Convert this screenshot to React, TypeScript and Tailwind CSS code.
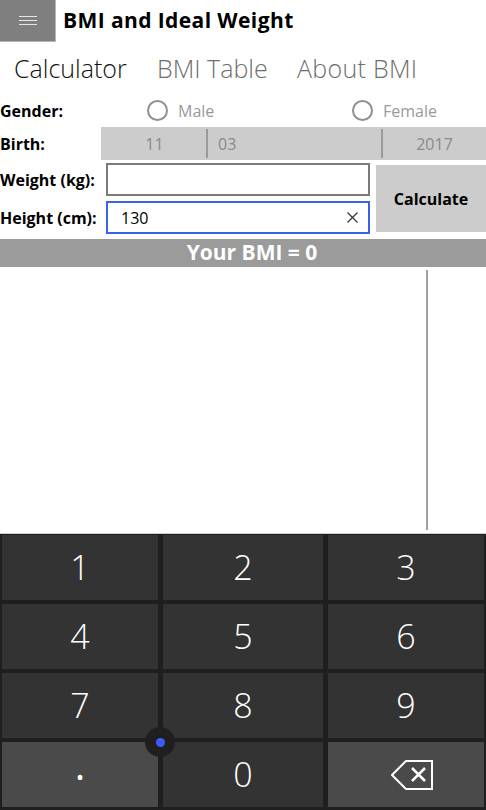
import React from "react";

const font = { fontFamily: '"Open Sans", "Noto Sans", sans-serif' };

function Radio({ label }: { label: string }) {
  return (
    <div className="flex items-center">
      <div className="w-[21px] h-[21px] rounded-full border-2 border-[#8f8f8f]" />
      <span className="ml-[10px] text-[16px] text-[#9a9a9a]">{label}</span>
    </div>
  );
}

function Key({ children, light }: { children: React.ReactNode; light?: boolean }) {
  return (
    <div
      className={`flex items-center justify-center h-[65px] text-white text-[34px] font-light ${
        light ? "bg-[#4a4a4a]" : "bg-[#333333]"
      }`}
    >
      {children}
    </div>
  );
}

export default function App() {
  return (
    <div className="w-[486px] h-[810px] bg-white overflow-hidden flex flex-col text-black" style={font}>
      {/* Header */}
      <div className="flex items-center h-[42px] shrink-0">
        <div className="w-[56px] h-[42px] bg-[#7f7f7f] border-r border-b border-[#b5b5b5] flex flex-col items-center justify-center gap-[3px]">
          <div className="w-[18px] h-[1px] bg-[#e6e6e6]" />
          <div className="w-[18px] h-[1px] bg-[#e6e6e6]" />
          <div className="w-[18px] h-[1px] bg-[#e6e6e6]" />
        </div>
        <div className="ml-[7px] text-[21px] font-bold tracking-[0.4px]">BMI and Ideal Weight</div>
      </div>

      {/* Tabs */}
      <div className="flex items-center h-[54px] pl-[14px] shrink-0 text-[25px] font-light">
        <div className="w-[143px] text-[#111111]">Calculator</div>
        <div className="w-[140px] text-[#6e6e6e]">BMI Table</div>
        <div className="text-[#6e6e6e] tracking-[0.3px]">About BMI</div>
      </div>

      {/* Gender */}
      <div className="flex items-center h-[29px] shrink-0">
        <div className="w-[147px] text-[16px] font-bold">Gender:</div>
        <div className="w-[205px]">
          <Radio label="Male" />
        </div>
        <Radio label="Female" />
      </div>

      {/* Birth */}
      <div className="flex items-center h-[33px] mt-[2px] shrink-0">
        <div className="w-[101px] text-[16px] font-bold">Birth:</div>
        <div className="flex-1 h-[33px] bg-[#cccccc] flex items-center text-[16px] text-[#8a8a8a]">
          <div className="w-[105px] text-center pl-[2px]">11</div>
          <div className="w-[2px] h-[29px] bg-[#9a9a9a]" />
          <div className="w-[173px] pl-[10px]">03</div>
          <div className="w-[2px] h-[29px] bg-[#9a9a9a]" />
          <div className="flex-1 text-center">2017</div>
        </div>
      </div>

      {/* Weight / Height */}
      <div className="flex items-center mt-[3px] h-[71px] shrink-0">
        <div className="flex flex-col gap-[5px]">
          <div className="flex items-center h-[33px]">
            <div className="w-[106px] text-[16px] font-bold">Weight (kg):</div>
            <div className="w-[264px] h-[33px] border-2 border-[#7a7a7a] bg-white" />
          </div>
          <div className="flex items-center h-[33px]">
            <div className="w-[106px] text-[16px] font-bold">Height (cm):</div>
            <div className="w-[264px] h-[33px] border-2 border-[#3a62e8] bg-white flex items-center pl-[13px] pr-[10px]">
              <span className="flex-1 text-[16px]">130</span>
              <svg width="11" height="11" viewBox="0 0 11 11">
                <path d="M0.5 0.5 L10.5 10.5 M10.5 0.5 L0.5 10.5" stroke="#333" strokeWidth="1.2" />
              </svg>
            </div>
          </div>
        </div>
        <div className="ml-[6px] w-[110px] h-[67px] bg-[#cccccc] flex items-center justify-center text-[16px] font-bold">
          Calculate
        </div>
      </div>

      {/* BMI bar */}
      <div className="mt-[5px] h-[28px] bg-[#9b9b9b] flex items-center justify-center pl-[18px] text-white text-[21px] font-bold shrink-0">
        Your BMI = 0
      </div>

      {/* Chart area */}
      <div className="flex-1 pt-[3px] pb-[3px]">
        <div className="ml-[426px] w-[2px] h-full bg-[#a0a0a0]" />
      </div>

      {/* Keyboard */}
      <div className="relative shrink-0 h-[277px] bg-[#1f1f1f] border-t border-[#cfcfcf] pt-[1px] px-[2px] grid grid-cols-[156px_160px_156px] gap-x-[5px] gap-y-[4px] content-start">
        <Key>1</Key>
        <Key>2</Key>
        <Key>3</Key>
        <Key>4</Key>
        <Key>5</Key>
        <Key>6</Key>
        <Key>7</Key>
        <Key>8</Key>
        <Key>9</Key>
        <Key light>
          <span className="text-[40px] font-normal -translate-y-[10px]">.</span>
        </Key>
        <Key>0</Key>
        <Key light>
          <svg width="42" height="30" viewBox="0 0 42 30" className="ml-[12px]">
            <path d="M15 1 H41 V29 H15 L1 15 Z" fill="none" stroke="white" strokeWidth="2" strokeLinejoin="miter" />
            <path d="M21 8 L34 21 M34 8 L21 21" stroke="white" strokeWidth="2.5" />
          </svg>
        </Key>
        <div className="absolute left-[145px] top-[193px] w-[30px] h-[30px] rounded-full bg-[#1f1f1f] flex items-center justify-center">
          <div className="w-[9px] h-[9px] rounded-full bg-[#3d5afe]" />
        </div>
      </div>
    </div>
  );
}
